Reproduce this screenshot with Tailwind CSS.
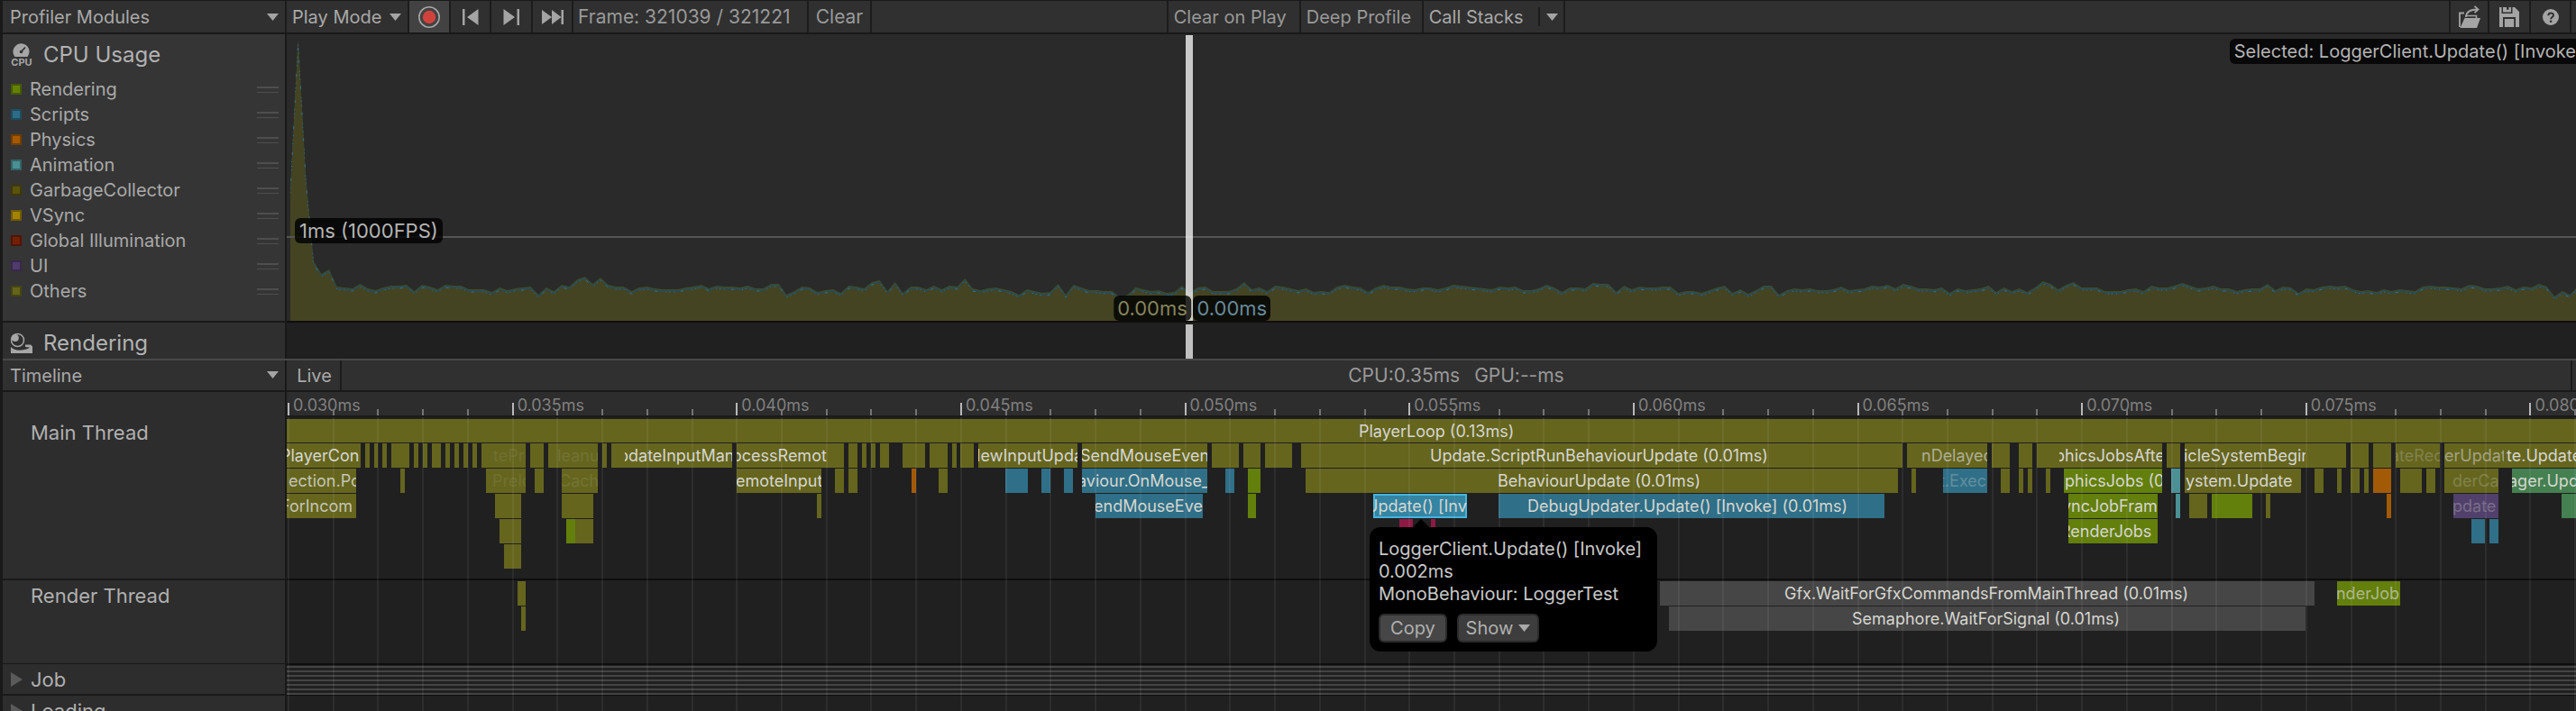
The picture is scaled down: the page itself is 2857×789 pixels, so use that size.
<!DOCTYPE html>
<html lang="en">
<head>
<meta charset="utf-8">
<title>Profiler</title>
<script src="https://cdn.jsdelivr.net/npm/@tailwindcss/browser@4"></script>
</head>
<body class="h-screen overflow-hidden bg-[#191919] font-['Inter',sans-serif] text-[20px] leading-6 text-[#a9a9a9]">
<div class="flex h-full flex-col overflow-hidden pl-[3px] pt-px">

  <header class="flex h-[37px] shrink-0 border-b-2 border-[#191919] bg-[#303030]">
    <button type="button" class="flex w-[315px] shrink-0 items-center justify-between border-r-2 border-[#1c1c1c] pl-2 pr-[7px]">Profiler Modules
      <svg width="13" height="8" viewBox="0 0 13 8" fill="#a4a4a4"><path d="M0 0h13L6.500 8z"/></svg>
    </button>
    <label class="relative flex w-[136px] shrink-0 items-center border-r-2 border-[#1c1c1c]">
      <select aria-label="Target" class="w-full appearance-none bg-transparent pl-1.5 outline-none"><option>Play Mode</option></select>
      <svg class="pointer-events-none absolute right-[7px] top-3.5" width="13" height="8" viewBox="0 0 13 8" fill="#a4a4a4"><path d="M0 0h13L6.500 8z"/></svg>
    </label>
    <button type="button" aria-label="Record" class="flex w-[46px] shrink-0 items-center justify-center border-r-2 border-[#1c1c1c] bg-[#424242]">
      <svg width="26" height="26" viewBox="0 0 26 26"><circle cx="13" cy="13" r="11.200" fill="none" stroke="#a6a6a6" stroke-width="1.600"/><circle cx="13" cy="13" r="7.200" fill="#d2423c"/></svg>
    </button>
    <button type="button" aria-label="Previous frame" class="flex w-[45px] shrink-0 items-center justify-center border-r-2 border-[#1c1c1c]">
      <svg width="18" height="18" viewBox="0 0 18 18" fill="#a4a4a4"><path d="M0 0h2.500v18H0zM17.500 0v18L5 9z"/></svg>
    </button>
    <button type="button" aria-label="Next frame" class="flex w-[46px] shrink-0 items-center justify-center border-r-2 border-[#1c1c1c]">
      <svg width="18" height="18" viewBox="0 0 18 18" fill="#a4a4a4"><path d="M15.500 0H18v18h-2.500zM.5 0v18L13 9z"/></svg>
    </button>
    <button type="button" aria-label="Current frame" class="flex w-[45px] shrink-0 items-center justify-center border-r-2 border-[#1c1c1c]">
      <svg width="24" height="16" viewBox="0 0 24 16" fill="#a4a4a4"><path d="M0 0l11 8L0 16zM11 0l10.500 8L11 16zM21.500 0H24v16h-2.500z"/></svg>
    </button>
    <div class="flex w-[261px] shrink-0 items-center border-r-2 border-[#1c1c1c] pl-[5px] text-[21px] text-[#999]">Frame: 321039 / 321221</div>
    <button type="button" class="flex w-[70px] shrink-0 items-center justify-center border-r-2 border-[#1c1c1c] text-[21px] text-[#999]">Clear</button>
    <div class="flex-1"></div>
    <button type="button" class="flex w-[149px] shrink-0 items-center border-x-2 border-[#1c1c1c] pl-1.5 text-[#999]">Clear on Play</button>
    <button type="button" class="flex w-[136px] shrink-0 items-center border-r-2 border-[#1c1c1c] pl-1.5 text-[#999]">Deep Profile</button>
    <div class="flex w-[157px] shrink-0 items-center border-r-2 border-[#1c1c1c]">
      <button type="button" class="w-[127px] pl-1.5 text-left">Call Stacks</button>
      <button type="button" aria-label="Call stack options" class="flex h-[21px] items-center border-l-2 border-[#1c1c1c] pl-[7px]"><svg width="13" height="8" viewBox="0 0 13 8" fill="#a4a4a4"><path d="M0 0h13L6.500 8z"/></svg></button>
    </div>
    <div class="flex-[3]"></div>
    <button type="button" aria-label="Load" class="flex w-[45px] shrink-0 items-center justify-center border-x-2 border-[#1c1c1c]">
      <svg width="26" height="26" viewBox="0 0 26 26"><path d="M2 24V8.500h5" fill="none" stroke="#a4a4a4" stroke-width="1.800"/><path d="M7.500 14h17.500l-4 11H2.500z" fill="#a4a4a4"/><path d="M9 13v-1.500h11.500V14" fill="none" stroke="#a4a4a4" stroke-width="1.600"/><path d="M9 12.500C9.500 7 13 4.500 21.500 4.500M18.500.8l4 3.700-4 3.700" fill="none" stroke="#a4a4a4" stroke-width="1.800"/></svg>
    </button>
    <button type="button" aria-label="Save" class="flex w-[46px] shrink-0 items-center justify-center border-r-2 border-[#1c1c1c]">
      <svg width="22" height="22" viewBox="0 0 22 22"><path d="M0 0h2.500v7h12V0h2.500l5 5v17h-4V11H4v11H0z" fill="#a4a4a4"/><path d="M4 0h4v2.800h2.500V0H13v5.500H4z" fill="#a4a4a4"/><path d="M5.800 13h10.400v9H5.800z" fill="#a4a4a4"/></svg>
    </button>
    <button type="button" aria-label="Help" class="flex w-[45px] shrink-0 items-center justify-center border-r-2 border-[#1c1c1c]">
      <svg width="18" height="18" viewBox="0 0 18 18"><circle cx="9" cy="9" r="9" fill="#a4a4a4"/><path d="M6.300 7.300C6.300 3.500 12 3.500 12 7c0 2-2.900 2.100-2.900 4.200" fill="none" stroke="#303030" stroke-width="2"/><circle cx="9.100" cy="13.700" r="1.300" fill="#303030"/></svg>
    </button>
    <div class="w-[5px] shrink-0"></div>
  </header>

  <section class="flex shrink-0">
    <aside class="w-[315px] shrink-0 border-r-2 border-[#191919]">
      <div class="h-[318px] bg-[#353535] pt-[9px]">
        <h2 class="flex h-7 items-center gap-3 pl-[9px] text-2xl text-[#b2b2b2]">
          <svg class="shrink-0" width="24" height="26" viewBox="0 0 24 26"><path d="M4.500 15A9 9 0 1 1 20.500 9.500a9 9 0 0 1-2 5.500z" fill="#a6a6a6"/><path d="M11.500 9.500l4.500-5" stroke="#353535" stroke-width="1.800"/><circle cx="11.500" cy="9.500" r="1.800" fill="#353535"/><text x="12" y="25" text-anchor="middle" font-size="11" font-weight="700" fill="#a6a6a6">CPU</text></svg>
          CPU Usage
        </h2>
        <ul id="legend" class="pt-2.5"></ul>
      </div>
      <h2 class="flex h-[42px] items-center gap-3 border-t-2 border-[#191919] bg-[#2f2f2f] pl-[9px] pt-[5px] text-2xl text-[#b2b2b2]">
        <svg class="shrink-0" width="24" height="24" viewBox="0 0 24 24"><circle cx="7.500" cy="8.500" r="7" fill="none" stroke="#a6a6a6" stroke-width="1.500"/><circle cx="4.800" cy="6" r="4" fill="#a6a6a6"/><path d="M0 16c3 3.500 8 4 12 3.500s7-1 9-3l-5-.5v-2.500h6l2 2V23H0z" fill="#a6a6a6"/></svg>
        Rendering
      </h2>
    </aside>
    <div class="relative min-w-0 flex-1">
      <div class="h-[318px] bg-[#2a2a2a] pl-1">
        <svg id="chart" class="block h-full w-full" viewBox="0 0 2535 318" preserveAspectRatio="none" role="img" aria-label="CPU usage"></svg>
      </div>
      <div class="h-[42px] border-t-2 border-[#0e0e0e] bg-[#202020]"></div>
      <div class="absolute inset-x-0 top-[224px] h-0.5 bg-[#545454]"></div>
      <div class="absolute left-[39.270%] top-px h-[317px] w-2 bg-white/75"></div>
      <div class="absolute left-[39.270%] top-[322px] h-[38px] w-2 bg-[#c0c0c0]"></div>
      <div class="absolute left-[9px] top-[204px] h-7 rounded-md bg-black/80 px-[5px] text-[22px] leading-7 text-[#b4b4b4]">1ms (1000FPS)</div>
      <div class="absolute left-[39.500%] top-[290px] h-7 -translate-x-full rounded-md bg-black/80 px-1 text-[22px] leading-7 text-[#84845c]">0.00ms</div>
      <div class="absolute left-[39.600%] top-[290px] h-7 rounded-md bg-black/80 px-1 text-[22px] leading-7 text-[#67899a]">0.00ms</div>
      <div class="absolute right-0 top-[5px] h-7 whitespace-nowrap rounded-l-md bg-black/80 pl-[5px] leading-7 text-[#b4b4b4]">Selected: LoggerClient.Update() [Invoke</div>
    </div>
  </section>

  <div class="flex h-[37px] shrink-0 items-stretch border-b-2 border-t-2 border-b-[#191919] border-t-[#484848] bg-[#303030]">
    <label class="relative flex w-[315px] shrink-0 items-center border-r-2 border-[#191919]">
      <select aria-label="View" class="w-full appearance-none bg-transparent pl-2 outline-none"><option>Timeline</option></select>
      <svg class="pointer-events-none absolute right-[7px] top-3" width="13" height="8" viewBox="0 0 13 8" fill="#a4a4a4"><path d="M0 0h13L6.500 8z"/></svg>
    </label>
    <button type="button" class="ml-0.5 flex w-[59px] shrink-0 items-center justify-center border-r-2 border-[#1c1c1c]">Live</button>
    <div class="flex flex-1 items-center justify-center gap-4 text-[21px] text-[#999]"><span>CPU:0.35ms</span><span>GPU:--ms</span></div>
    <div class="mr-1 w-0.5 bg-[#1c1c1c]"></div>
  </div>

  <main class="flex min-h-0 flex-1">
    <div class="w-[315px] shrink-0 border-r-2 border-[#191919] bg-[#2d2d2d] text-[22px] text-[#b0b0b0]">
      <div class="h-[209px] border-b-2 border-[#191919] pl-[31px] pt-[33px]">Main Thread</div>
      <div class="h-[93px] border-b border-[#191919] pl-[31px] pt-[5px]">Render Thread</div>
      <button type="button" class="flex h-[35px] w-full items-center gap-[9px] border-b-2 border-[#191919] pl-[9px]"><svg width="13" height="16" viewBox="0 0 13 16" fill="#5a5a5a"><path d="M0 0l13 8L0 16z"/></svg>Job</button>
      <button type="button" class="flex h-[35px] w-full items-center gap-[9px] border-b-2 border-[#191919] pl-[9px]"><svg width="13" height="16" viewBox="0 0 13 16" fill="#5a5a5a"><path d="M0 0l13 8L0 16z"/></svg>Loading</button>
    </div>
    <div class="relative min-w-0 flex-1 overflow-hidden bg-[#202020] text-[18px]">
      <div id="ruler" class="relative h-7 border-b-2 border-[#1a1a1a] bg-[#2d2d2d] text-[#808080]"></div>
      <div id="main" class="flex h-[181px] flex-col gap-px border-b-2 border-[#0e0e0e] pt-0.5"></div>
      <div id="render" class="flex h-[94px] flex-col gap-px border-b-2 border-[#0e0e0e] pt-px"></div>
      <div class="flex h-[34px] flex-col gap-[3px] border-b border-[#0e0e0e] pt-px">
        <i class="h-0.5 shrink-0 bg-[#444]"></i><i class="h-0.5 shrink-0 bg-[#444]"></i><i class="h-0.5 shrink-0 bg-[#444]"></i><i class="h-0.5 shrink-0 bg-[#444]"></i><i class="h-0.5 shrink-0 bg-[#444]"></i><i class="h-0.5 shrink-0 bg-[#444]"></i><i class="h-0.5 shrink-0 bg-[#444]"></i>
      </div>
      <div id="grid" class="pointer-events-none absolute inset-x-0 bottom-0 top-7"></div>

      <div role="tooltip" class="absolute left-[47.300%] top-[150px] w-[319px] rounded-xl bg-black pb-2.5 pl-2.5 pt-3 text-[20px] leading-[25px] text-[#c8c8c8]">
        <svg class="absolute -top-[9px] left-[47px]" width="20" height="10" viewBox="0 0 20 10"><path d="M10 0l10 10H0z"/></svg>
        <p class="whitespace-nowrap">LoggerClient.Update() [Invoke]</p>
        <p>0.002ms</p>
        <p>MonoBehaviour: LoggerTest</p>
        <div class="mt-[9px] flex gap-[11px] text-[#b0b0b0]">
          <button type="button" class="h-8 w-[76px] rounded-md border-2 border-[#2b2b2b] bg-[#464646]">Copy</button>
          <button type="button" class="flex h-8 w-[91px] items-center justify-center gap-1.5 rounded-md border-2 border-[#2b2b2b] bg-[#3d3d3d]">Show<svg width="13" height="8" viewBox="0 0 13 8" fill="#a8a8a8"><path d="M0 0h13L6.500 8z"/></svg></button>
        </div>
      </div>
    </div>
  </main>
</div>

<script>
const legend = [['Rendering', '#648200'], ['Scripts', '#2b6d88'], ['Physics', '#a55a00'], ['Animation', '#499095'], ['GarbageCollector', '#5b520c'], ['VSync', '#a38200'], ['Global Illumination', '#741f05'], ['UI', '#503b6d'], ['Others', '#64641b']];
document.getElementById('legend').innerHTML = legend.map(([name, color]) => `
  <li class="flex h-7 items-center pl-[9px] pr-[7px]">
    <button type="button" class="flex flex-1 items-center gap-[9px] text-left"><i class="size-3 border-2 border-black/30" style="background:${color}"></i>${name}</button>
    <i class="h-[7px] w-6 border-b border-t-2 border-[#4e4e4e]"></i>
  </li>`).join('');

// Frame samples, as heights above the chart base.
const samples = [145, 312, 159, 66, 52, 57,
  38,37,36,41,36,34,37,39,39,40,33,40,38,35,40,39,39,35,35,35,32,37,34,36,37,38,29,37,33,40,38,46,49,41,48,40,38,38,33,37,38,36,35,35,
  35,37,38,40,36,39,38,38,37,39,36,36,41,41,29,33,38,37,32,34,35,31,39,38,36,43,45,33,43,31,38,38,35,39,35,39,38,47,36,34,36,37,35,33,
  29,35,33,31,32,41,29,40,37,34,34,33,33,26,29,37,35,33,34,31,32,39,31,37,38,33,33,33,36,43,35,37,33,39,38,36,34,36,32,33,32,38,40,38,
  37,32,37,40,38,38,36,35,37,37,35,37,40,39,38,37,36,35,38,37,38,34,34,36,40,37,32,37,37,36,42,41,41,32,39,35,38,37,37,38,38,31,33,33,
  31,34,37,39,31,35,30,34,39,39,29,34,36,35,36,34,34,35,38,34,35,36,39,38,40,36,41,39,36,36,35,37,31,36,34,35,36,39,32,37,33,36,32,37,
  44,41,35,40,43,37,37,37,33,33,33,35,36,33,39,37,37,39,42,39,36,37,39,36,36,33,35,36,36,41,34,38,37,31,36,35,38,39,38,39,35,33,34,32,
  35,33,35,34,33,38,39,38,38,37,36,40,39,36,36,37,39,35,38,37,41,38,27,33,29,38,190];
const STEP = 8.6;
const line = d => samples.map((h, i) => `${(i * STEP).toFixed(1)} ${318 - h + d}`).join('L');
const area = d => `M0 318L${line(d)}V318Z`;
document.getElementById('chart').innerHTML = `
  <path d="${area(0)}" fill="#434d1e"/><path d="${area(1)}" fill="#2b4a55"/><path d="${area(3)}" fill="#444423"/>
  <path d="M${line(3)}" fill="none" stroke="#2f7fa6" stroke-width="1" stroke-dasharray="1 4 1 7 3 9 1 3" opacity=".8"/>`;

const WIDTH = 2539, ORIGIN = 318;
const pos = x => ((x - ORIGIN) / WIDTH * 100).toFixed(4) + '%';
const len = w => (w / WIDTH * 100).toFixed(4) + '%';

let ruler = '', grid = '';
for (let i = 0; i <= 51; i++) {
  const x = 319 + i * 49.73, major = i % 5 === 0;
  grid += `<i class="absolute inset-y-0 w-0.5 bg-white/6" style="left:${pos(x)}"></i>`;
  ruler += `<i class="absolute bottom-0 w-0.5 ${major ? 'h-3.5 bg-[#b8b8b8]' : 'h-[7px] bg-[#747474]'}" style="left:${pos(x)}"></i>`;
  if (major) ruler += `<span class="absolute top-[3px] pl-1.5" style="left:${pos(x)}">${(0.03 + i / 1000).toFixed(3)}ms</span>`;
}
document.getElementById('ruler').innerHTML = ruler;
document.getElementById('grid').innerHTML = grid;

const colors = { o: 'bg-[#65651e]', b: 'bg-[#2f6f87]', g: 'bg-[#637f0c]', r: 'bg-[#a35a06]', t: 'bg-[#4a9095]', p: 'bg-[#51406b]', e: 'bg-[#448050]', m: 'bg-[#8f1945]', w: 'bg-[#464646]', s: 'bg-[#3484a2] border-2 border-[#45b4df]' };
// bars: [start, end, color]; labels: [clip start, clip end, text start, text, opacity]
const mainRows = [
  { bars: [[318,2857,'o']], labels: [[1500,1700,1507,'PlayerLoop (0.13ms)',1]] },
  { bars: [[318,400,'o'],[405,410,'o'],[415,419,'o'],[424,429,'o'],[434,454,'o'],[459,464,'o'],[469,474,'o'],[479,489,'o'],[494,499,'o'],[504,509,'o'],[514,519,'o'],[524,529,'o'],[534,583,'o'],[588,603,'o'],[608,663,'o'],[668,673,'o'],[678,812,'o'],[817,936,'o'],[941,951,'o'],[956,961,'o'],[966,971,'o'],[976,986,'o'],[1001,1026,'o'],[1031,1051,'o'],[1056,1061,'o'],[1065,1080,'o'],[1085,1195,'o'],[1200,1339,'o'],[1344,1374,'o'],[1379,1398,'o'],[1403,1433,'o'],[1443,2110,'o'],[2115,2204,'o'],[2209,2229,'o'],[2239,2254,'o'],[2259,2398,'o'],[2403,2418,'o'],[2423,2602,'o'],[2607,2627,'o'],[2632,2652,'o'],[2657,2706,'o'],[2711,2857,'o']],
    labels: [[318,400,311,'PlayerCon',1],[546,583,547,'tePre',.1],[618,663,605,'Cleanup',.12],[693,812,686,'pdateInputMan',1],[817,936,812,'ocessRemot',1],[1085,1195,1074,'NewInputUpda',1],[1200,1339,1198,'SendMouseEven',1],[1560,2000,1586,'Update.ScriptRunBehaviourUpdate (0.01ms)',1],[2130,2204,2131,'nDelayed',.65],[2284,2398,2279,'phicsJobsAfter',1],[2423,2557,2422,'icleSystemBegin',1],[2657,2706,2651,'ateRec',.25],[2711,2777,2711,'erUpdat',.55],[2779,2857,2780,'te.Update',1]] },
  { bars: [[318,395,'o'],[444,449,'o'],[539,583,'o'],[593,603,'o'],[623,663,'o'],[817,911,'o'],[926,936,'o'],[941,951,'o'],[1011,1016,'r'],[1041,1051,'o'],[1115,1140,'b'],[1155,1165,'b'],[1180,1190,'b'],[1200,1339,'b'],[1359,1369,'b'],[1384,1398,'g'],[1448,2105,'o'],[2120,2125,'o'],[2155,2204,'b'],[2219,2229,'o'],[2239,2244,'o'],[2249,2254,'o'],[2269,2274,'o'],[2289,2398,'g'],[2408,2418,'t'],[2423,2552,'o'],[2567,2577,'o'],[2592,2597,'o'],[2607,2617,'o'],[2622,2627,'o'],[2632,2652,'r'],[2662,2686,'o'],[2691,2701,'o'],[2711,2771,'o'],[2786,2857,'e']],
    labels: [[318,395,320,'ection.Pos',.85],[543,583,546,'Prelo',.1],[623,663,620,'Cach',.12],[817,911,816,'emoteInput',1],[1200,1339,1195,'aviour.OnMouse_',1],[1640,1920,1661,'BehaviourUpdate (0.01ms)',1],[2155,2204,2151,'t.Exec',.3],[2289,2398,2290,'phicsJobs (0.',1],[2423,2552,2424,'ystem.Update',1],[2720,2771,2720,'derCa',.25],[2786,2857,2782,'ager.Upd',1]] },
  { bars: [[318,395,'o'],[549,578,'o'],[623,658,'o'],[906,911,'o'],[1215,1334,'b'],[1384,1393,'g'],[1523,1627,'s'],[1662,2090,'b'],[2294,2393,'g'],[2413,2418,'t'],[2428,2448,'o'],[2453,2498,'g'],[2513,2518,'o'],[2647,2652,'r'],[2721,2771,'p'],[2841,2857,'e']],
    labels: [[318,395,311,'ForIncom',.85],[1215,1334,1213,'endMouseEve',1],[1523,1627,1515,'Update() [Inv',1],[1680,2090,1694,'DebugUpdater.Update() [Invoke] (0.01ms)',1],[2294,2393,2287,'yncJobFram',1],[2721,2771,2720,'pdate',.3]] },
  { bars: [[554,578,'o'],[628,638,'g'],[638,658,'o'],[1552,1567,'m'],[1587,1592,'m'],[2294,2393,'g'],[2741,2756,'b'],[2761,2771,'b']], labels: [[2294,2393,2285,'RenderJobs',1]] },
  { bars: [[559,578,'o']], labels: [] },
];
const renderRows = [
  { bars: [[574,583,'o'],[1841,2567,'w'],[2592,2662,'g']], labels: [[1950,2500,1979,'Gfx.WaitForGfxCommandsFromMainThread (0.01ms)',1],[2592,2662,2591,'nderJob',.65]] },
  { bars: [[578,583,'o'],[1851,2557,'w']], labels: [[2040,2500,2054,'Semaphore.WaitForSignal (0.01ms)',1]] },
];
const renderTrack = (id, rows) => {
  document.getElementById(id).innerHTML = rows.map((row, n) => `<div class="relative shrink-0 ${id === 'main' && n === 0 ? 'h-[26px]' : 'h-[27px]'}">` +
    row.bars.map(([a, b, c]) => `<i class="absolute inset-y-0 ${colors[c]}" style="left:${pos(a)};width:${len(b - a)}"></i>`).join('') +
    row.labels.map(([a, b, x, text, o]) => `<div class="absolute inset-y-0 overflow-hidden whitespace-nowrap leading-7 text-[#d6d6d0]" style="left:${pos(a)};width:${len(b - a)}"><span class="block" style="margin-left:${x - a}px;opacity:${o}">${text}</span></div>`).join('') +
    '</div>').join('');
};
renderTrack('main', mainRows);
renderTrack('render', renderRows);
</script>
</body>
</html>
